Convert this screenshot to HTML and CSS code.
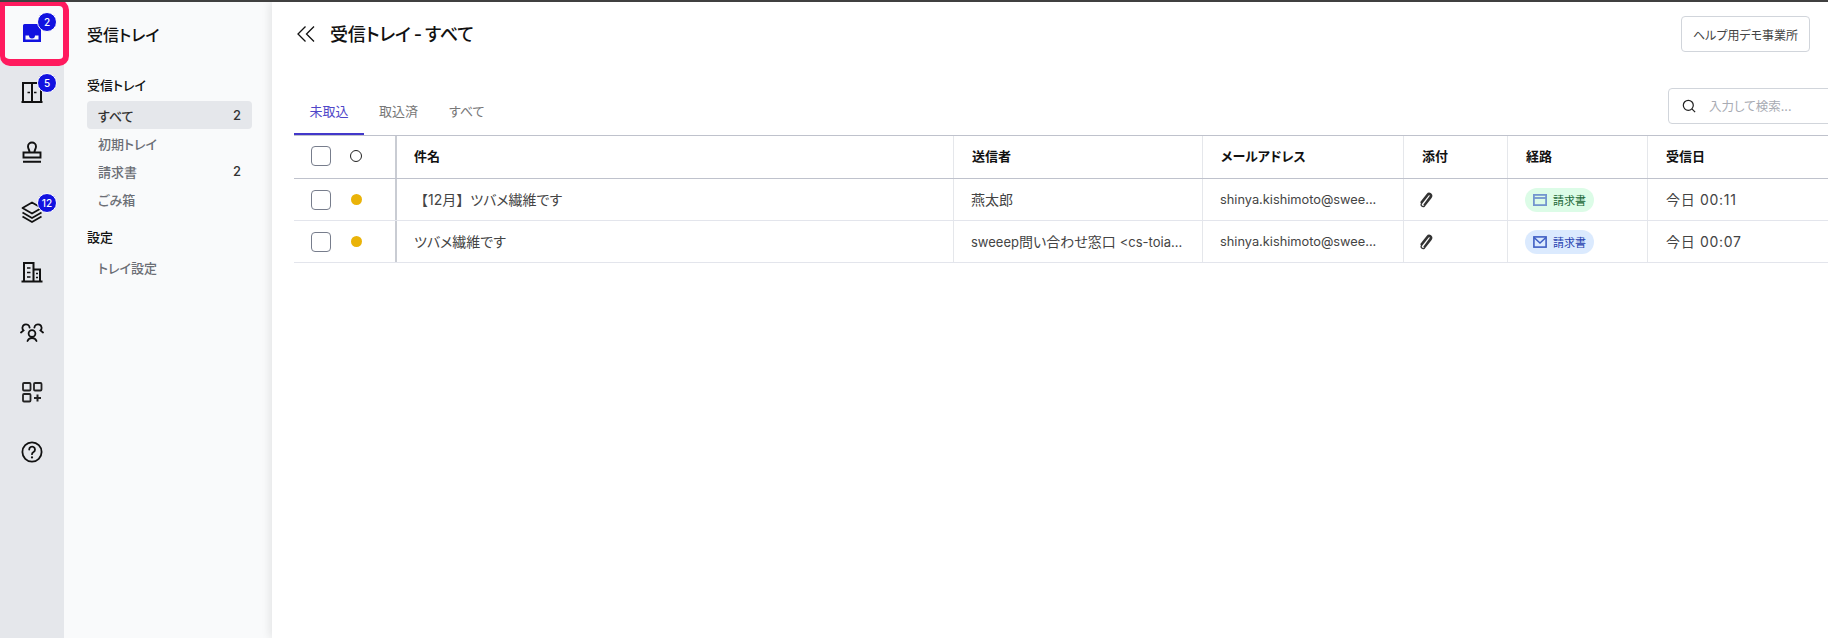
FILE: index.html
```html
<!DOCTYPE html>
<html lang="ja">
<head>
<meta charset="utf-8">
<title>受信トレイ</title>
<link rel="stylesheet" href="styles.css">
</head>
<body>
<div class="app">
  <nav class="rail">
    <a class="rail-item rail-item-active">
      <svg class="ico" viewBox="0 0 24 24"><path fill="#1212e0" fill-rule="evenodd" d="M4.500 3h15A1.500 1.500 0 0 1 21 4.500V21H3V4.500A1.500 1.500 0 0 1 4.500 3zM5.500 14.500V18.500h13V14.500h-3.500a3 3 0 0 1-6 0H5.500z"/></svg>
      <span class="badge">2</span>
    </a>
    <a class="rail-item">
      <svg class="ico" viewBox="0 0 24 24" fill="none" stroke="#111" stroke-width="2"><path d="M1.500 22h21M3 22V3h18v19M12 3v19"/><path stroke-width="1.500" d="M7.500 12.500h2.500M14 12.500h2.500"/></svg>
      <span class="badge">5</span>
    </a>
    <a class="rail-item">
      <svg class="ico" viewBox="0 0 24 24" fill="none" stroke="#111" stroke-width="1.900"><path d="M9.500 12.500c.4-2.200-1.500-3.500-1.500-6a4 4 0 0 1 8 0c0 2.500-1.900 3.800-1.500 6M3.500 12.500h17v5h-17zM3 21.800h18"/></svg>
    </a>
    <a class="rail-item">
      <svg class="ico" viewBox="0 0 24 24" fill="none" stroke="#111" stroke-width="1.800" stroke-linejoin="round"><path d="M12 2.500l9.500 5.500L12 13.500 2.500 8z"/><path d="M2.500 12.500L12 18l9.500-5.500M2.500 16.500L12 22l9.500-5.500"/></svg>
      <span class="badge">12</span>
    </a>
    <a class="rail-item">
      <svg class="ico" viewBox="0 0 24 24" fill="none" stroke="#111" stroke-width="2"><path d="M1.500 21.500h21M4 21.500V3h9.500v18.500M13.500 9.500H20v12"/><path stroke-width="1.600" d="M7 8h3.500M7 12.500h3.500M7 17h3.500M16 13.500h2M16 17.500h2"/></svg>
    </a>
    <a class="rail-item">
      <svg class="ico" viewBox="0 0 24 24" fill="none" stroke="#111" stroke-width="1.800" stroke-linecap="round"><circle cx="12" cy="13.500" r="3.400"/><path d="M7.500 21c.7-1.700 2.400-3 4.500-3s3.800 1.300 4.500 3"/><path d="M9.600 7.600A3.600 3.600 0 1 0 3.500 10.500L1 12.500M14.400 7.600A3.600 3.600 0 1 1 20.500 10.500L23 12.500"/></svg>
    </a>
    <a class="rail-item">
      <svg class="ico" viewBox="0 0 24 24" fill="none" stroke="#222" stroke-width="1.800"><rect x="3" y="3" width="7.500" height="7.500" rx="1"/><rect x="14" y="3" width="7.500" height="7.500" rx="1"/><rect x="3" y="14" width="7.500" height="7.500" rx="1"/><path stroke-width="2" d="M14 18h7M17.500 14.500v7"/></svg>
    </a>
    <a class="rail-item">
      <svg class="ico" viewBox="0 0 24 24" fill="none" stroke="#111" stroke-width="1.800" stroke-linecap="round"><circle cx="12" cy="12" r="9.600"/><path d="M9.200 9.500a2.900 2.900 0 1 1 4.400 2.500c-1 .6-1.600 1.100-1.600 2.200"/><path stroke-width="2.200" d="M12 17.300v.1"/></svg>
    </a>
  </nav>

  <aside class="side">
    <h2 class="side-title">受信トレイ</h2>
    <h3 class="side-head">受信トレイ</h3>
    <ul class="side-list">
      <li class="side-item side-item-on"><span>すべて</span><span>2</span></li>
      <li class="side-item"><span>初期トレイ</span></li>
      <li class="side-item"><span>請求書</span><span>2</span></li>
      <li class="side-item"><span>ごみ箱</span></li>
    </ul>
    <h3 class="side-head side-head-next">設定</h3>
    <ul class="side-list">
      <li class="side-item"><span>トレイ設定</span></li>
    </ul>
  </aside>

  <main class="main">
    <header class="top">
      <div class="top-left">
        <svg class="collapse" viewBox="0 0 18 16" fill="none" stroke="#111" stroke-width="1.300"><path d="M8.500 .5L1 8l7.500 7.500M17 .5L9.500 8l7.500 7.500"/></svg>
        <h1 class="page-title">受信トレイ - すべて</h1>
      </div>
      <button class="office">ヘルプ用デモ事業所</button>
    </header>

    <div class="tabbar">
      <div class="tabs">
        <span class="tab tab-on">未取込</span>
        <span class="tab">取込済</span>
        <span class="tab">すべて</span>
      </div>
      <div class="search">
        <svg class="search-ico" viewBox="0 0 16 16" fill="none" stroke="#222" stroke-width="1.400"><circle cx="7.200" cy="7.200" r="5.700"/><path d="M11.300 11.300L15 15"/></svg>
        <span class="search-text">入力して検索...</span>
      </div>
    </div>

    <div class="table">
      <div class="row row-head">
        <div class="cell cell-check"><span class="box"></span><span class="ring"></span></div>
        <div class="cell cell-subject">件名</div>
        <div class="cell cell-from">送信者</div>
        <div class="cell cell-mail">メールアドレス</div>
        <div class="cell cell-att">添付</div>
        <div class="cell cell-route">経路</div>
        <div class="cell cell-date">受信日</div>
      </div>
      <div class="row">
        <div class="cell cell-check"><span class="box"></span><span class="dot"></span></div>
        <div class="cell cell-subject"><span class="text"><span class="full">【</span>12月<span class="full">】</span>ツバメ繊維です</span></div>
        <div class="cell cell-from">燕太郎</div>
        <div class="cell cell-mail">shinya.kishimoto@swee...</div>
        <div class="cell cell-att"><svg class="clip" viewBox="0 0 14 16" fill="none" stroke="#333" stroke-width="1.300" stroke-linecap="round"><path d="M5 12.800l6.200-8.300c.8-1.200-.8-2.700-2-1.500L2.600 11.400c-1.400 2 1 4.200 3 2.500l6.500-8.400c2-2.800-1.800-5.800-4-3.200L2 10.200"/></svg></div>
        <div class="cell cell-route"><span class="pill pill-green"><svg class="pill-ico" viewBox="0 0 14 12" fill="none" stroke="#7396cf" stroke-width="1.800"><rect x=".9" y=".9" width="12.200" height="10.200"/><path d="M.9 4h12.200"/></svg><span class="pill-text">請求書</span></span></div>
        <div class="cell cell-date">今日 00:11</div>
      </div>
      <div class="row">
        <div class="cell cell-check"><span class="box"></span><span class="dot"></span></div>
        <div class="cell cell-subject">ツバメ繊維です</div>
        <div class="cell cell-from"><span class="text"><span class="latin">sweeep</span>問い合わせ窓口 <span class="latin">&lt;cs-toia...</span></span></div>
        <div class="cell cell-mail">shinya.kishimoto@swee...</div>
        <div class="cell cell-att"><svg class="clip" viewBox="0 0 14 16" fill="none" stroke="#333" stroke-width="1.300" stroke-linecap="round"><path d="M5 12.800l6.200-8.300c.8-1.200-.8-2.700-2-1.500L2.600 11.400c-1.400 2 1 4.200 3 2.500l6.500-8.400c2-2.800-1.800-5.800-4-3.200L2 10.200"/></svg></div>
        <div class="cell cell-route"><span class="pill pill-blue"><svg class="pill-ico" viewBox="0 0 14 12" fill="none" stroke="#3f5fc4" stroke-width="1.600"><rect x=".9" y=".9" width="12.200" height="10.200"/><path d="M1 1.500L7 7l6-5.500"/></svg><span class="pill-text pill-text-blue">請求書</span></span></div>
        <div class="cell cell-date">今日 00:07</div>
      </div>
    </div>
  </main>
</div>
</body>
</html>
```
FILE: styles.css
```css
* { box-sizing: border-box; }
html, body { margin: 0; height: 100%; overflow: hidden; }
body {
  font-family: Inter, "Noto Sans CJK JP", sans-serif;
  font-feature-settings: "palt";
  color: #222;
  background: #fff;
  border-top: 2px solid #404040;
}
h1, h2, h3, ul { margin: 0; padding: 0; font-weight: 500; list-style: none; }
.app { display: flex; height: 636px; }

.rail {
  width: 64px;
  flex: none;
  background: #e5e7eb;
  display: flex;
  flex-direction: column;
  position: relative;
}
.rail-item {
  height: 60px;
  flex: none;
  display: flex;
  align-items: center;
  justify-content: center;
  position: relative;
}
.rail-item-active {
  width: 69px;
  height: 66px;
  margin-top: -2px;
  margin-bottom: -4px;
  padding-right: 4px;
  background: #f9fafb;
  border-style: solid;
  border-color: #ff1a5e;
  border-width: 6px 6px 7px 5px;
  border-radius: 0 10px 10px 10px;
  z-index: 2;
}
.ico { width: 24px; height: 24px; display: block; }
.badge {
  position: absolute;
  left: 37px;
  top: 11px;
  width: 20px;
  height: 20px;
  border-radius: 50%;
  background: #1212e0;
  border: 1.500px solid #fff;
  color: #fff;
  font-size: 10px;
  font-weight: 500;
  display: flex;
  align-items: center;
  justify-content: center;
}
.rail-item-active .badge { left: 32px; top: 6px; }

.side {
  width: 208px;
  flex: none;
  background: #f9fafb;
  padding: 0 20px 0 23px;
}
.side-title { font-size: 16px; line-height: 24px; margin-top: 21px; color: #111; }
.side-head { font-size: 13px; line-height: 20px; margin-top: 28px; margin-bottom: 6px; color: #111; }
.side-head-next { margin-top: 14px; margin-bottom: 6px; }
.side-item {
  height: 28px;
  display: flex;
  align-items: center;
  justify-content: space-between;
  font-size: 13px;
  color: #6b6e75;
  padding: 0 11px;
  border-radius: 4px;
}
.side-item-on { background: #e5e7eb; color: #333; }
.side-item span:nth-child(2) { color: #333; }

.main {
  flex: 1;
  min-width: 0;
  padding: 0 0 0 22px;
  box-shadow: -3px 0 8px rgba(0, 0, 0, .08);
  background: #fff;
  position: relative;
  overflow: hidden;
}
.top {
  display: flex;
  justify-content: space-between;
  padding-top: 14px;
  padding-right: 18px;
  height: 99px;
}
.top-left { display: flex; align-items: center; height: 36px; gap: 15px; }
.collapse { width: 18px; height: 16px; margin-left: 3px; }
.page-title { font-size: 18px; color: #111; word-spacing: -1.500px; letter-spacing: -.2px; padding-bottom: 2px; }
.office {
  height: 36px;
  width: 129px;
  padding: 0;
  background: #fff;
  border: 1px solid #d1d5db;
  border-radius: 4px;
  font: inherit;
  font-size: 12px;
  font-feature-settings: "palt";
  color: #444;
}
.tabbar { display: flex; justify-content: space-between; align-items: flex-end; height: 34px; }
.tabs { display: flex; }
.tab {
  height: 34px;
  width: 70px;
  text-align: center;
  line-height: 20px;
  font-size: 13px;
  color: #777;
}
.tab + .tab { width: auto; padding: 0 16px; margin-left: -1px; }
.tab-on { color: #4f46c8; border-bottom: 2px solid #4338ca; }
.search {
  width: 200px;
  height: 36px;
  margin-right: -40px;
  align-self: flex-start;
  margin-top: -13px;
  border: 1px solid #d1d5db;
  border-radius: 4px;
  display: flex;
  align-items: center;
  padding-left: 13px;
  padding-bottom: 1px;
  gap: 13px;
  flex: none;
}
.search-ico { width: 14px; height: 14px; }
.search-text { font-size: 12.500px; color: #a8abb3; }

.table { border-top: 1.500px solid #bfc2cc; }
.row {
  display: flex;
  height: 42px;
  border-bottom: 1px solid #e3e5ec;
  font-size: 14px;
  color: #444;
}
.row-head {
  height: 43px;
  border-bottom: 1.500px solid #bfc2cc;
  font-weight: 600;
  font-size: 13px;
  color: #111;
}
.cell {
  display: flex;
  align-items: center;
  flex: none;
  padding-left: 17px;
  padding-bottom: 2px;
  border-right: 1px solid #e5e7eb;
  white-space: nowrap;
}
.row-head .cell { padding-left: 18px; padding-bottom: 3px; }
.row-head .cell.cell-subject { padding-left: 17px; }
.row-head .cell.cell-check { padding-left: 17px; padding-bottom: 2px; }
.cell-check { width: 103px; padding-left: 17px; padding-bottom: 0; gap: 19px; border-right: 2px solid #c9ccd3; }
.cell-subject { width: 557px; }
.cell-from { width: 249px; }
.cell-mail { width: 201px; }
.row:not(.row-head) .cell-mail { font-size: 12.800px; padding-bottom: 0; }
.cell-att { width: 104px; padding-left: 15px; padding-bottom: 0; }
.cell-route { width: 140px; padding-left: 18px; padding-bottom: 0; }
.cell-date { flex: 1; border-right: 0; padding-left: 18px; }
.row:not(.row-head) .cell-date { letter-spacing: .7px; }
.latin { font-size: 13px; }
.full { font-feature-settings: normal; }
.box { width: 20px; height: 20px; border: 1.500px solid #777d8c; border-radius: 4px; flex: none; background: #fff; }
.ring { width: 12px; height: 12px; border: 1.500px solid #222; border-radius: 50%; flex: none; }
.dot { width: 11px; height: 11px; background: #eab308; border-radius: 50%; flex: none; margin-left: 1px; }
.clip { width: 14px; height: 16px; }
.pill {
  height: 24px;
  width: 69px;
  margin-left: -1px;
  border-radius: 12px;
  display: flex;
  align-items: center;
  justify-content: center;
  gap: 6px;
}
.pill-green { background: #dcfce7; }
.pill-blue { background: #dbeafe; }
.pill-ico { width: 14px; height: 12px; }
.pill-text { font-size: 11px; font-weight: 400; color: #166534; }
.pill-text-blue { color: #1e40af; }
```
